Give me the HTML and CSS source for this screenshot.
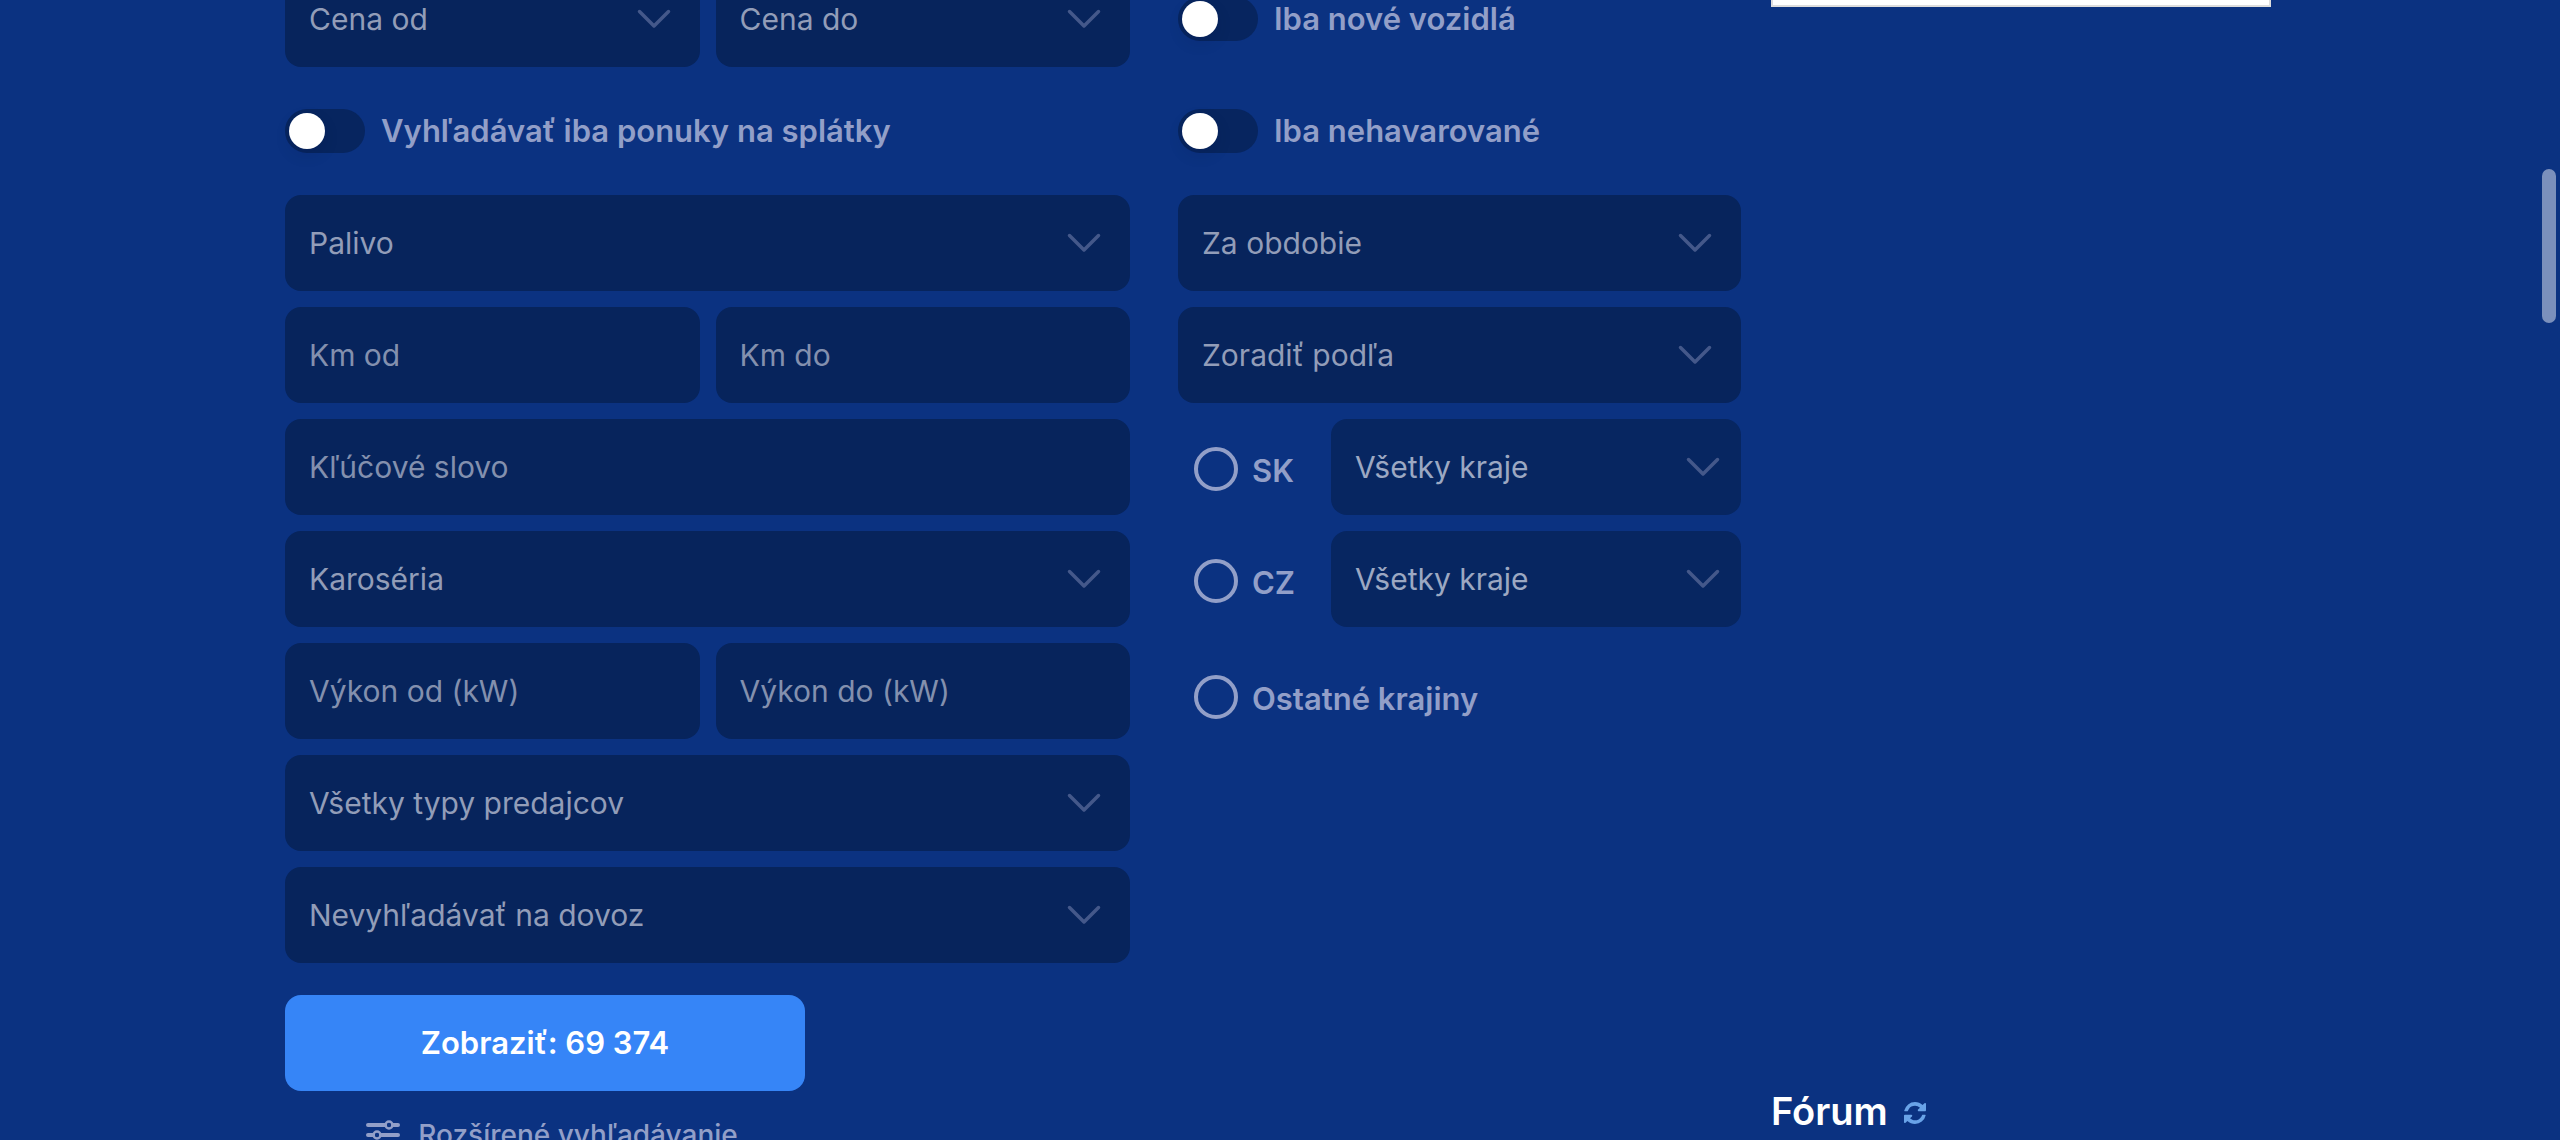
FILE: index.html
```html
<!DOCTYPE html>
<html lang="sk">
<head>
<meta charset="utf-8">
<title>Vyhľadávanie vozidiel</title>
<link rel="stylesheet" href="styles.css">
</head>
<body>
<svg class="sprite" aria-hidden="true">
  <symbol id="chevron" viewBox="0 0 34 20"><path d="M2.500 2.500L17 17L31.500 2.500" fill="none" stroke="currentColor" stroke-width="3.500" stroke-linecap="round" stroke-linejoin="round"/></symbol>
</svg>
<main class="page">
  <form class="filters" id="search">
    <div class="pair">
      <div class="field"><select aria-label="Cena od"><option>Cena od</option></select><svg class="chevron"><use href="#chevron"/></svg></div>
      <div class="field"><select aria-label="Cena do"><option>Cena do</option></select><svg class="chevron"><use href="#chevron"/></svg></div>
    </div>
    <label class="toggle"><input type="checkbox"><span>Vyhľadávať iba ponuky na splátky</span></label>
    <div class="field"><select aria-label="Palivo"><option>Palivo</option></select><svg class="chevron"><use href="#chevron"/></svg></div>
    <div class="pair">
      <div class="field"><input type="text" placeholder="Km od" aria-label="Km od"></div>
      <div class="field"><input type="text" placeholder="Km do" aria-label="Km do"></div>
    </div>
    <div class="field"><input type="text" placeholder="Kľúčové slovo" aria-label="Kľúčové slovo"></div>
    <div class="field"><select aria-label="Karoséria"><option>Karoséria</option></select><svg class="chevron"><use href="#chevron"/></svg></div>
    <div class="pair">
      <div class="field"><input type="text" placeholder="Výkon od (kW)" aria-label="Výkon od (kW)"></div>
      <div class="field"><input type="text" placeholder="Výkon do (kW)" aria-label="Výkon do (kW)"></div>
    </div>
    <div class="field"><select aria-label="Typ predajcu"><option>Všetky typy predajcov</option></select><svg class="chevron"><use href="#chevron"/></svg></div>
    <div class="field"><select aria-label="Dovoz"><option>Nevyhľadávať na dovoz</option></select><svg class="chevron"><use href="#chevron"/></svg></div>
    <div class="actions">
      <button class="submit" type="submit">Zobraziť: 69 374</button>
      <a class="advanced" href="#advanced">
        <svg class="advanced-icon" viewBox="0 0 34 32" fill="none" stroke="currentColor" stroke-width="4" stroke-linecap="round"><path d="M2 6H19M27 6H32M2 16H7M15 16H32M2 26H19M27 26H32"/><g stroke-width="2.500"><circle cx="23" cy="6" r="3.500"/><circle cx="11" cy="16" r="3.500"/><circle cx="23" cy="26" r="3.500"/></g></svg>
        <span>Rozšírené vyhľadávanie</span>
      </a>
    </div>
  </form>
  <section class="filters extra">
    <label class="toggle"><input type="checkbox" form="search"><span>Iba nové vozidlá</span></label>
    <label class="toggle"><input type="checkbox" form="search"><span>Iba nehavarované</span></label>
    <div class="field"><select aria-label="Za obdobie"><option>Za obdobie</option></select><svg class="chevron"><use href="#chevron"/></svg></div>
    <div class="field"><select aria-label="Zoradiť podľa"><option>Zoradiť podľa</option></select><svg class="chevron"><use href="#chevron"/></svg></div>
    <div class="country">
      <label class="radio"><input type="radio" name="country" form="search"><span>SK</span></label>
      <div class="field region"><select aria-label="Kraje SK"><option>Všetky kraje</option></select><svg class="chevron"><use href="#chevron"/></svg></div>
    </div>
    <div class="country">
      <label class="radio"><input type="radio" name="country" form="search"><span>CZ</span></label>
      <div class="field region"><select aria-label="Kraje CZ"><option>Všetky kraje</option></select><svg class="chevron"><use href="#chevron"/></svg></div>
    </div>
    <div class="country other">
      <label class="radio"><input type="radio" name="country" form="search"><span>Ostatné krajiny</span></label>
    </div>
  </section>
  <aside class="side">
    <div class="banner"></div>
    <div class="forum">
      <h2>Fórum</h2>
      <a href="#refresh" aria-label="Obnoviť"><svg class="refresh" viewBox="0 0 1536 1536" fill="currentColor"><path d="M1511 928q0 5-1 7-64 268-268 434.500t-478 166.500q-146 0-282.500-55t-243.500-157l-129 129q-19 19-45 19t-45-19-19-45v-448q0-26 19-45t45-19h448q26 0 45 19t19 45-19 45l-137 137q71 66 161 102t187 36q134 0 250-65t186-179q11-17 53-117 8-23 30-23h192q13 0 22.500 9.500t9.500 22.500zM1536 128v448q0 26-19 45t-45 19h-448q-26 0-45-19t-19-45 19-45l138-138q-148-137-349-137-134 0-250 65t-186 179q-11 17-53 117-8 23-30 23h-199q-13 0-22.500-9.500t-9.500-22.500v-7q65-268 270-434.500t480-166.500q146 0 284 55.500t245 156.500l130-129q19-19 45-19t45 19 19 45z"/></svg></a>
    </div>
  </aside>
</main>
<div class="scroll-thumb"></div>
</body>
</html>
```
FILE: styles.css
```css
* { box-sizing: border-box; }

body {
  margin: 0;
  height: 100vh;
  overflow: hidden;
  background: #0b3281;
  color: #929fc8;
  font: 400 30px/40px Inter, "Liberation Sans", sans-serif;
}

.sprite { display: none; }

/* The view is scrolled so that the first row is partly out of sight. */
.page {
  display: grid;
  grid-template-columns: minmax(0, 845fr) minmax(0, 641fr) 500px;
  max-width: 1990px;
  margin: -29px auto 0;
  padding-right: 4px;
}

.filters {
  display: flex;
  flex-direction: column;
  gap: 16px;
}

.extra { margin: 0 30px 0 48px; }

.pair {
  display: grid;
  grid-template-columns: 1fr 1fr;
  gap: 16px;
}

.field {
  display: grid;
  align-items: center;
  height: 96px;
  border-radius: 16px;
  background: #07245c;
}

.field > * { grid-area: 1 / 1; }

.field select,
.field input {
  width: 100%;
  height: 100%;
  padding: 0 24px;
  border: 0;
  border-radius: 16px;
  background: none;
  color: #929db8;
  font: inherit;
  appearance: none;
}

.field input::placeholder { color: #8390ae; opacity: 1; }

.chevron {
  justify-self: end;
  width: 34px;
  height: 20px;
  margin-right: 29px;
  color: #44588a;
  pointer-events: none;
}

.toggle {
  display: flex;
  align-items: center;
  gap: 16px;
  height: 96px;
  font-size: 31px;
  font-weight: 600;
}

.toggle input {
  display: flex;
  flex: none;
  align-items: center;
  width: 80px;
  height: 44px;
  margin: 0;
  padding: 4px;
  border-radius: 22px;
  background: #07255f;
  appearance: none;
}

.toggle input::before {
  content: "";
  width: 36px;
  height: 36px;
  border-radius: 50%;
  background: #fff;
  box-shadow: 0 6px 16px rgba(0, 10, 50, .1);
}

.country {
  display: flex;
  align-items: center;
  height: 96px;
}

.country.other { height: 104px; }

.radio {
  display: flex;
  flex: 1;
  align-items: center;
  gap: 14px;
  padding: 4px 0 0 16px;
  font-size: 31px;
  font-weight: 600;
}

.radio input {
  flex: none;
  width: 44px;
  height: 44px;
  margin: 0;
  border: 4px solid #929fc8;
  border-radius: 50%;
  appearance: none;
}

.radio span { padding-top: 4px; }

.region { width: 410px; background: #072661; }
.region select { color: #9ca8c2; }
.region .chevron { margin-right: 21px; }

.actions {
  width: 520px;
  max-width: 100%;
  padding-top: 16px;
}

.submit {
  width: 100%;
  height: 96px;
  border: 0;
  border-radius: 16px;
  background: #3685f7;
  color: #fff;
  font: inherit;
  font-size: 31px;
  font-weight: 600;
}

.advanced {
  display: flex;
  align-items: center;
  justify-content: center;
  gap: 18px;
  margin-top: 24px;
  padding-left: 14px;
  color: inherit;
  font-size: 28px;
  font-weight: 500;
  text-decoration: none;
}

.advanced-icon { width: 34px; height: 32px; }

.side {
  display: flex;
  flex-direction: column;
  justify-content: space-between;
  padding-bottom: 24px;
}

.banner {
  height: 36px;
  border: 2px solid #ddd;
  background: #fff;
}

.forum {
  display: flex;
  align-items: center;
  gap: 16px;
  color: #fff;
}

.forum a { display: flex; padding-top: 4px; color: #69a3e8; }

h2 { margin: 0; font-size: 38px; font-weight: 600; }

.refresh { width: 22px; height: 22px; }

.scroll-thumb {
  position: fixed;
  top: 169px;
  right: 4px;
  width: 14px;
  height: 154px;
  border-radius: 7px;
  background: #7b90bc;
}
```
